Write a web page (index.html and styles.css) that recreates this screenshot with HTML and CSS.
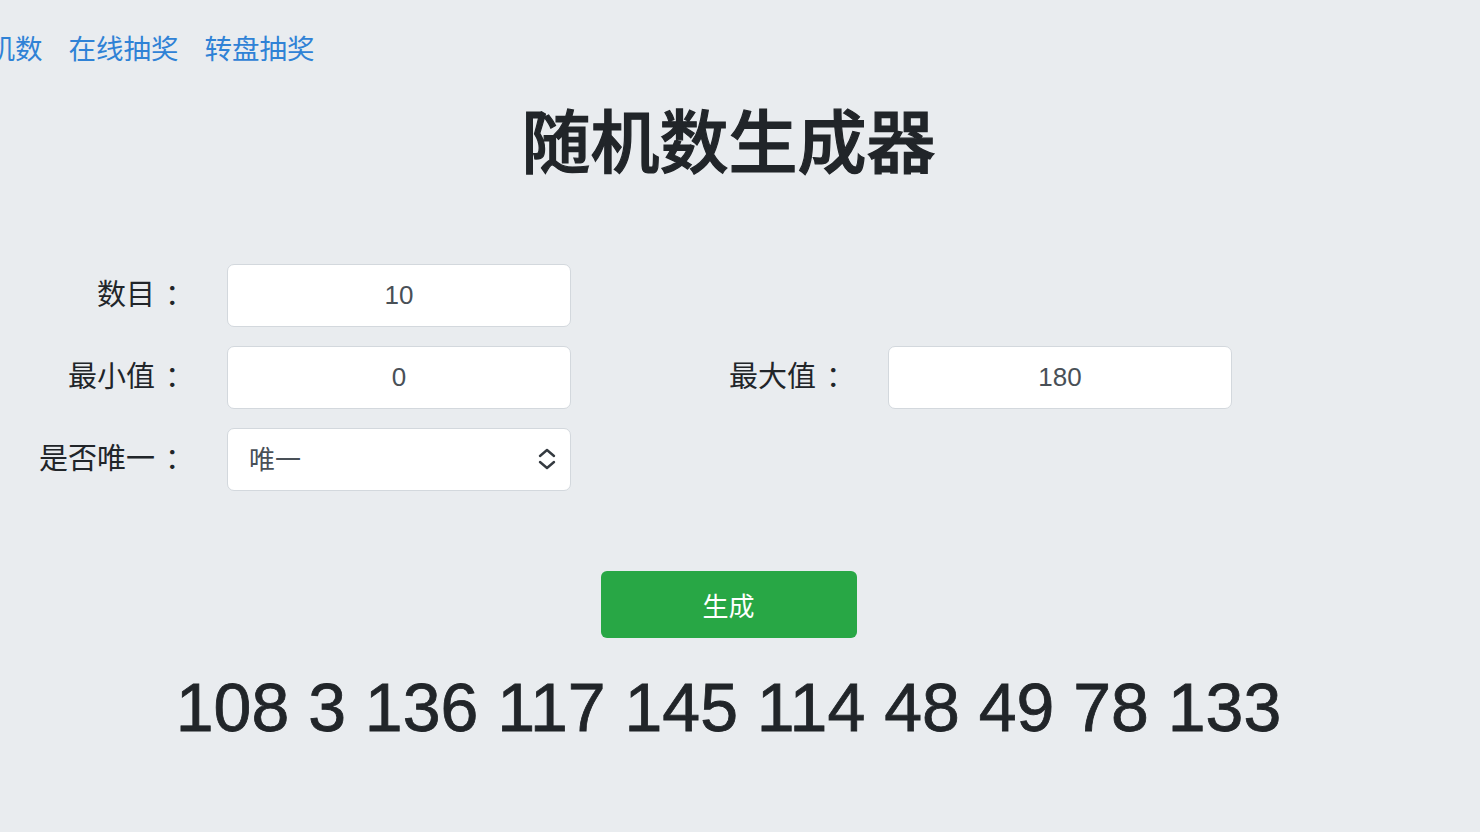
FILE: index.html
```html
<!DOCTYPE html>
<html lang="zh-CN">
<head>
    <meta charset="UTF-8">
    <meta name="viewport" content="width=device-width, initial-scale=1.0">
    <title>随机数生成器</title>
    <link rel="stylesheet" href="styles.css">
</head>
<body>

    <!-- top links -->
    <div class="nav">
        <a href="#">随机数</a>
        <a href="#">在线抽奖</a>
        <a href="#">转盘抽奖</a>
    </div>

    <div class="page">
        <h1 class="title">随机数生成器</h1>

        <div class="form">
            <label class="label" for="count">数目<span class="colon">：</span></label>
            <input class="field" id="count" type="text" value="10">
            <span></span><span></span>

            <label class="label" for="min">最小值<span class="colon">：</span></label>
            <input class="field" id="min" type="text" value="0">
            <label class="label" for="max">最大值<span class="colon">：</span></label>
            <input class="field" id="max" type="text" value="180">

            <label class="label" for="unique">是否唯一<span class="colon">：</span></label>
            <div class="selectWrap">
                <select class="field select" id="unique">
                    <option>唯一</option>
                    <option>不唯一</option>
                </select>
                <svg class="arrows" width="20" height="24" viewBox="0 0 20 24">
                    <path d="M3 9 L10 3 L17 9" fill="none" stroke="#343a40" stroke-width="2.4" stroke-linecap="round" stroke-linejoin="round"/>
                    <path d="M3 15 L10 21 L17 15" fill="none" stroke="#343a40" stroke-width="2.4" stroke-linecap="round" stroke-linejoin="round"/>
                </svg>
            </div>
        </div>

        <button class="generate" id="generate">生成</button>

        <div class="result" id="result">108 3 136 117 145 114 48 49 78 133</div>
    </div>

    <script>
        document.getElementById('generate').addEventListener('click', function() {
            const count = parseInt(document.getElementById('count').value) || 0;
            const min = parseInt(document.getElementById('min').value) || 0;
            const max = parseInt(document.getElementById('max').value) || 0;
            const unique = document.getElementById('unique').selectedIndex === 0;
            let nums = [];
            while (nums.length < count) {
                const n = Math.floor(Math.random() * (max - min + 1)) + min;
                if (unique && nums.includes(n)) {
                    if (nums.length >= max - min + 1) break;
                    continue;
                }
                nums.push(n);
            }
            document.getElementById('result').textContent = nums.join(' ');
        });
    </script>
</body>
</html>
```

FILE: styles.css
```css
body {
    margin: 0;
    background-color: #e9ecef;
    color: #212529;
    font-family: "Liberation Sans", "Noto Sans CJK SC", sans-serif;
}
.nav {
    display: flex;
    gap: 26px;
    margin-left: -40px;
    padding-top: 30px;
    font-size: 27.5px;
    line-height: 40px;
}
.nav a {
    color: #2f82d6;
    text-decoration: none;
}
.page {
    width: 1457px;
    text-align: center;
}
.title {
    margin: 34px 0 0;
    font-size: 69px;
    line-height: 82px;
    font-weight: 500;
    -webkit-text-stroke: 1.2px #212529;
}
.form {
    display: grid;
    grid-template-columns: 184px 344px 231px 344px;
    grid-auto-rows: 63px;
    column-gap: 43px;
    row-gap: 19px;
    margin-top: 78px;
    text-align: left;
}
.label {
    font-size: 29px;
    line-height: 63px;
    text-align: right;
    color: #212529;
}
.colon {
    margin-left: 10px;
    margin-right: -10px;
}
.field {
    box-sizing: border-box;
    width: 344px;
    height: 63px;
    border: 1px solid #d3d8dd;
    border-radius: 7px;
    background-color: white;
    color: #495057;
    font-family: "Liberation Sans", "Noto Sans CJK SC", sans-serif;
    font-size: 26px;
    text-align: center;
    outline: none;
}
.selectWrap {
    position: relative;
}
.select {
    appearance: none;
    -webkit-appearance: none;
    text-align: left;
    padding-left: 21px;
}
.arrows {
    position: absolute;
    right: 14px;
    top: 19px;
    pointer-events: none;
}
.generate {
    margin-top: 80px;
    width: 256px;
    height: 67px;
    border: none;
    border-radius: 6px;
    background-color: #28a745;
    color: white;
    font-family: "Liberation Sans", "Noto Sans CJK SC", sans-serif;
    font-size: 26px;
    cursor: pointer;
}
.result {
    margin-top: 27px;
    font-size: 68px;
    line-height: 84px;
    -webkit-text-stroke: 0.8px #212529;
}
```
